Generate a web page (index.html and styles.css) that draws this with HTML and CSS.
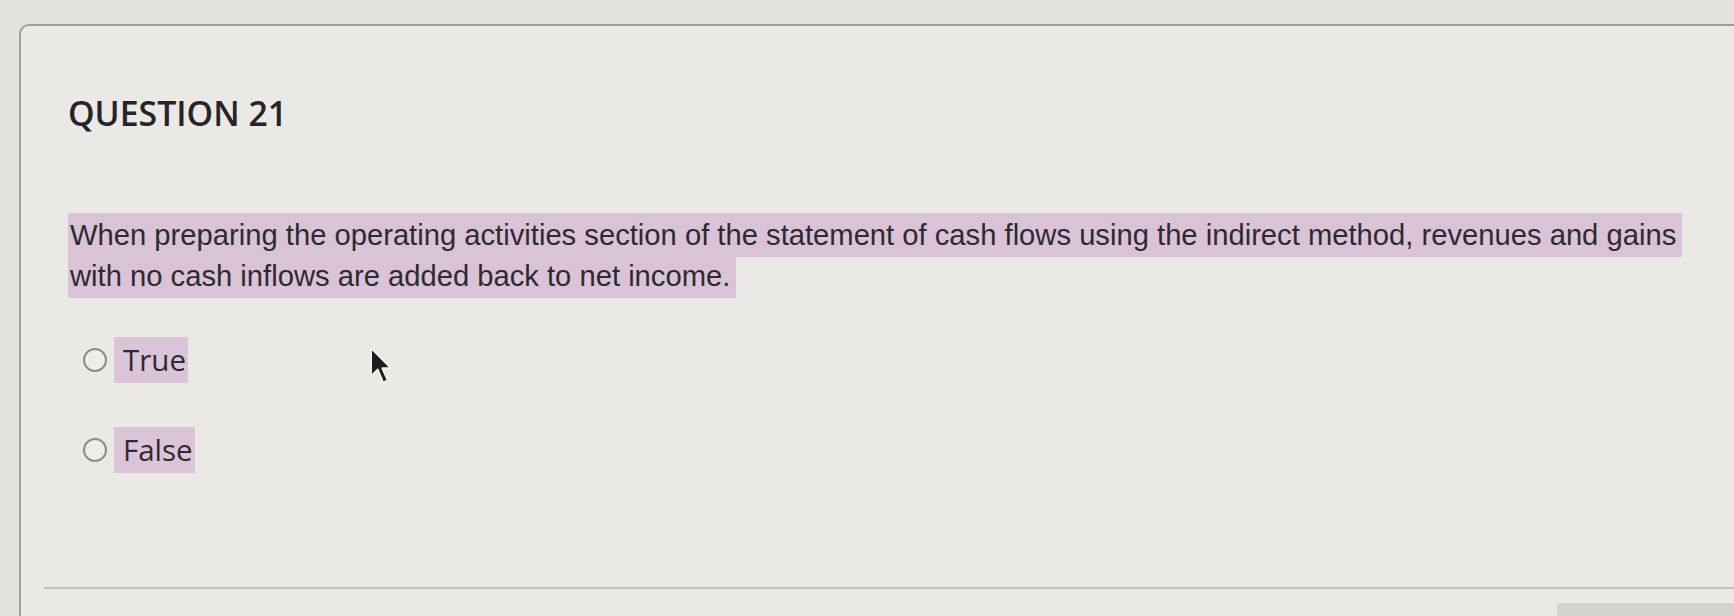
FILE: index.html
```html
<!DOCTYPE html>
<html lang="en">
<head>
<meta charset="utf-8">
<title>Question 21</title>
<link rel="stylesheet" href="styles.css">
</head>
<body>
<div class="panel">
  <h2 class="qtitle">QUESTION 21</h2>
  <p class="qtext"><span class="hl">When preparing the operating activities section of the statement of cash flows using the indirect method, revenues and gains with no cash inflows are added back to net income.</span></p>
  <div class="options">
    <label class="option"><span class="radio"></span><span class="opt-label">True</span></label>
    <label class="option"><span class="radio"></span><span class="opt-label">False</span></label>
  </div>
  <div class="divider"></div>
  <div class="footer"><span class="btn"></span></div>
</div>
<svg class="cursor" width="24" height="40" viewBox="0 0 22 36">
  <path d="M2 2 L2 27 L8 21 L13 33 L17 31 L12 20 L20 20 Z" fill="#1d1c20" stroke="#f4f2ef" stroke-width="1.5" stroke-linejoin="round"/>
</svg>
</body>
</html>
```

FILE: styles.css
```css
html, body {
  margin: 0;
  padding: 0;
  height: 100%;
  overflow: hidden;
}

body {
  background: #e4e2de;
  position: relative;
}

.panel {
  box-sizing: border-box;
  margin: 24px 0 0 19px;
  width: 1760px;
  height: 600px;
  border: 2px solid #a19f9d;
  border-radius: 10px 10px 0 0;
  background: #ebe9e5;
  padding: 0 0 0 47px;
}

.qtitle {
  margin: 67px 0 0 0;
  font-family: "Open Sans", "Noto Sans", sans-serif;
  font-weight: 600;
  font-size: 33.8px;
  line-height: 40px;
  color: #262428;
  letter-spacing: 0;
}

.qtext {
  margin: 82px 0 0 0;
  width: 1640px;
  font-family: "Liberation Sans", Arial, sans-serif;
  font-size: 29.2px;
  line-height: 41px;
  color: #2e2a33;
}

.hl {
  background: #dac3d7;
  padding: 6px 6px 6px 2px;
  -webkit-box-decoration-break: clone;
  box-decoration-break: clone;
}

.options {
  margin-top: 40px;
  display: flex;
  flex-direction: column;
  gap: 44px;
}

.option {
  display: flex;
  align-items: center;
  height: 46px;
}

.radio {
  box-sizing: border-box;
  width: 24px;
  height: 24px;
  margin-left: 15px;
  border: 2px solid #8e8c8c;
  border-radius: 50%;
  background: #efedea;
}

.opt-label {
  margin-left: 7px;
  font-family: "Open Sans", "Noto Sans", sans-serif;
  font-size: 29.5px;
  line-height: 46px;
  color: #2f2838;
  background: #dbc3d8;
  padding: 0 2px 0 9px;
}

.divider {
  margin: 114px 0 0 -24px;
  height: 2px;
  background: #c2c0bd;
}

.footer {
  display: flex;
  justify-content: flex-end;
  margin-top: 14px;
}

.btn {
  display: block;
  width: 220px;
  height: 40px;
  margin-left: 1487px;
  background: #d5d3d0;
  border-radius: 2px;
}

.cursor {
  position: absolute;
  left: 369px;
  top: 346px;
}
```
